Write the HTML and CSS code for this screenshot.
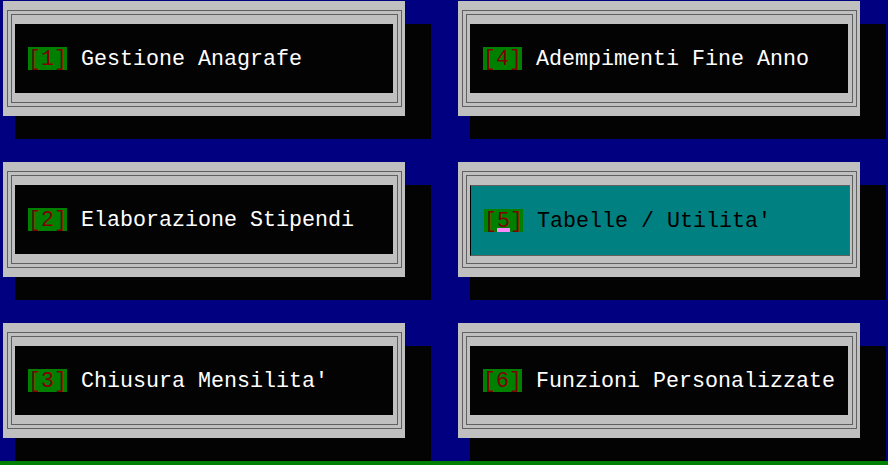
FILE: index.html
```html
<!DOCTYPE html>
<html lang="it">
<head>
    <meta charset="UTF-8">
    <title>Menu Principale</title>
    <link rel="stylesheet" href="styles.css">
</head>
<body>
    <div class="menu">
        <div class="panel">
            <div class="frame"><div class="frame-in">
                <div class="screen"><span class="key">[1]</span><span class="label">Gestione Anagrafe</span></div>
            </div></div>
        </div>
        <div class="panel">
            <div class="frame"><div class="frame-in">
                <div class="screen"><span class="key">[4]</span><span class="label">Adempimenti Fine Anno</span></div>
            </div></div>
        </div>
        <div class="panel">
            <div class="frame"><div class="frame-in">
                <div class="screen"><span class="key">[2]</span><span class="label">Elaborazione Stipendi</span></div>
            </div></div>
        </div>
        <div class="panel">
            <div class="frame"><div class="frame-in">
                <div class="screen selected"><span class="key">[<span class="cursor">5</span>]</span><span class="label">Tabelle / Utilita'</span></div>
            </div></div>
        </div>
        <div class="panel">
            <div class="frame"><div class="frame-in">
                <div class="screen"><span class="key">[3]</span><span class="label">Chiusura Mensilita'</span></div>
            </div></div>
        </div>
        <div class="panel">
            <div class="frame"><div class="frame-in">
                <div class="screen"><span class="key">[6]</span><span class="label">Funzioni Personalizzate</span></div>
            </div></div>
        </div>
    </div>
    <div class="status-bar"></div>
</body>
</html>
```

FILE: styles.css
```css
body {
    margin: 0;
    width: 888px;
    height: 465px;
    overflow: hidden;
    background-color: #000080;
    display: flex;
    flex-direction: column;
    font-family: "Courier New", "Liberation Mono", monospace;
}

.menu {
    flex: 1;
    padding: 1px 0 0 3px;
    display: grid;
    grid-template-columns: 402px 402px;
    grid-auto-rows: 115px;
    column-gap: 53px;
    row-gap: 46px;
    align-content: start;
}

/* grey window with a hard black drop shadow */
.panel {
    box-sizing: border-box;
    width: 402px;
    height: 115px;
    padding: 9px 3px 9px 4px;
    background-color: #c0c0c0;
    box-shadow: 12px 23px 0 #030303, 26px 23px 0 #030303;
}

.frame {
    box-sizing: border-box;
    height: 100%;
    padding: 3px;
    border: 1px solid #606060;
}

.frame-in {
    box-sizing: border-box;
    height: 100%;
    padding: 9px 4px 9px 3px;
    border: 1px solid #606060;
}

.screen {
    box-sizing: border-box;
    height: 69px;
    padding-left: 13px;
    background-color: #030303;
    color: #ffffff;
    display: flex;
    align-items: center;
    font-size: 21.67px;
    line-height: 23px;
    white-space: pre;
}

.screen.selected {
    height: 71px;
    margin-right: -2px;
    border: 1px solid #606060;
    border-left-color: #000;
    background-color: #008080;
    color: #000;
}

.key {
    display: inline-block;
    height: 23px;
    padding-top: 1px;
    box-sizing: border-box;
    background-color: #008000;
    color: #800000;
}

.label {
    margin-left: 14px;
    padding-top: 1px;
}

.cursor {
    display: inline-block;
    height: 22px;
    vertical-align: top;
    box-shadow: inset 0 -4px 0 #ff88ff;
}

.status-bar {
    height: 4px;
    background-color: #008000;
}
```
